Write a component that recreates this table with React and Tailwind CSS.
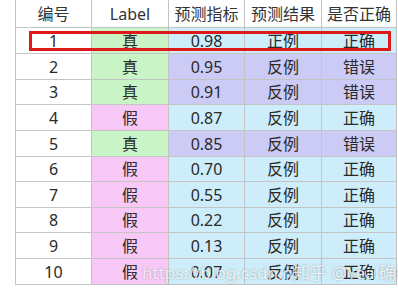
import React from 'react';

const rows = [
  { id: 1, label: '真', score: '0.98', pred: '正例', ok: true },
  { id: 2, label: '真', score: '0.95', pred: '反例', ok: false },
  { id: 3, label: '真', score: '0.91', pred: '反例', ok: false },
  { id: 4, label: '假', score: '0.87', pred: '反例', ok: true },
  { id: 5, label: '真', score: '0.85', pred: '反例', ok: false },
  { id: 6, label: '假', score: '0.70', pred: '反例', ok: true },
  { id: 7, label: '假', score: '0.55', pred: '反例', ok: true },
  { id: 8, label: '假', score: '0.22', pred: '反例', ok: true },
  { id: 9, label: '假', score: '0.13', pred: '反例', ok: true },
  { id: 10, label: '假', score: '0.07', pred: '反例', ok: true },
];

const heights = ['h-[26px]', 'h-[26px]', 'h-[25px]', 'h-[26px]', 'h-[26px]', 'h-[25px]', 'h-[26px]', 'h-[25px]', 'h-[26px]', 'h-[26px]'];

const cell = 'flex items-center justify-center border-r border-b border-[#c4c4c4]';

const App = () => {
  return (
    <div
      className="relative w-[398px] h-[292px] bg-white text-[16px] text-[#2a2a2a] overflow-hidden"
      style={{ fontFamily: '"Noto Sans", "Noto Sans CJK SC", sans-serif' }}
    >
      <div className="ml-[15px] w-[381px] border-l border-[#c4c4c4]">
        <div className="grid grid-cols-[76px_77px_76px_77px_75px] h-[28px] text-[#333]">
          <div className={cell}>编号</div>
          <div className={cell}>Label</div>
          <div className={cell}>预测指标</div>
          <div className={cell}>预测结果</div>
          <div className={cell}>是否正确</div>
        </div>
        {rows.map((r, i) => {
          const tone = r.ok ? 'bg-[#cdedfb]' : 'bg-[#cccbf6]';
          return (
            <div key={r.id} className={`grid grid-cols-[76px_77px_76px_77px_75px] ${heights[i]}`}>
              <div className={`${cell} bg-white`}>{r.id}</div>
              <div className={`${cell} ${r.label === '真' ? 'bg-[#c9f5c6]' : 'bg-[#f8c9f7]'}`}>{r.label}</div>
              <div className={`${cell} ${tone}`}>{r.score}</div>
              <div className={`${cell} ${tone}`}>{r.pred}</div>
              <div className={`${cell} ${tone}`}>{r.ok ? '正确' : '错误'}</div>
            </div>
          );
        })}
      </div>

      {/* highlight box on row 1 */}
      <div className="absolute left-[29px] top-[31px] w-[362px] h-[20px] border-[3px] border-[#dc1a1a]" />

      {/* watermark */}
      <div
        className="absolute left-[142px] top-[260px] text-[17px] text-white/80 whitespace-nowrap"
        style={{ textShadow: '0 0 2px rgba(0,0,0,0.35)' }}
      >
        https://blog.csdn.n知乎 @Yeal确确
      </div>
    </div>
  );
};

export default App;
